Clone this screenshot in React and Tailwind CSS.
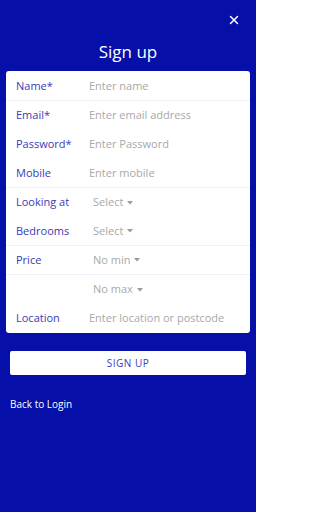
import { X } from "lucide-react";

function Row({ label, children, border }) {
  return (
    <div className={`h-[29px] flex items-center px-[10px] ${border ? "border-b border-[#eef0fa]" : ""}`}>
      <span className="w-[73px] text-[11px] text-[#3a3ab8] shrink-0">{label}</span>
      {children}
    </div>
  );
}

function Input({ placeholder }) {
  return <span className="text-[11px] text-[#a8a8a8]">{placeholder}</span>;
}

function Select({ value }) {
  return (
    <span className="ml-[4px] text-[11px] text-[#a8a8a8] flex items-center gap-[4px]">
      {value}
      <svg width="6" height="4" viewBox="0 0 6 4">
        <path d="M0 0 L6 0 L3 3.5 Z" fill="#9a9a9a" />
      </svg>
    </span>
  );
}

export default function App() {
  return (
    <div
      className="w-[256px] h-[512px] bg-[#0610a8] flex flex-col"
      style={{ fontFamily: "'Open Sans', sans-serif" }}
    >
      {/* Close */}
      <div className="flex justify-end pt-[13px] pr-[15px]">
        <X size={14} strokeWidth={2.5} className="text-white" />
      </div>

      <h1 className="text-center text-white text-[17px] mt-[16px] leading-none">Sign up</h1>

      {/* Form card */}
      <div className="mx-[6px] mt-[11px] bg-white rounded-[3px] pt-[1px]">
        <Row label="Name*" border><Input placeholder="Enter name" /></Row>
        <Row label="Email*"><Input placeholder="Enter email address" /></Row>
        <Row label="Password*"><Input placeholder="Enter Password" /></Row>
        <Row label="Mobile" border><Input placeholder="Enter mobile" /></Row>
        <Row label="Looking at"><Select value="Select" /></Row>
        <Row label="Bedrooms" border><Select value="Select" /></Row>
        <Row label="Price" border><Select value="No min" /></Row>
        <Row label=""><Select value="No max" /></Row>
        <Row label="Location"><Input placeholder="Enter location or postcode" /></Row>
      </div>

      <button className="mx-[10px] mt-[18px] h-[24px] bg-white rounded-[2px] text-[10px] tracking-wider text-[#3a3ab8]">
        SIGN UP
      </button>

      <div className="ml-[10px] mt-[22px] text-white text-[10px]">Back to Login</div>
    </div>
  );
}
